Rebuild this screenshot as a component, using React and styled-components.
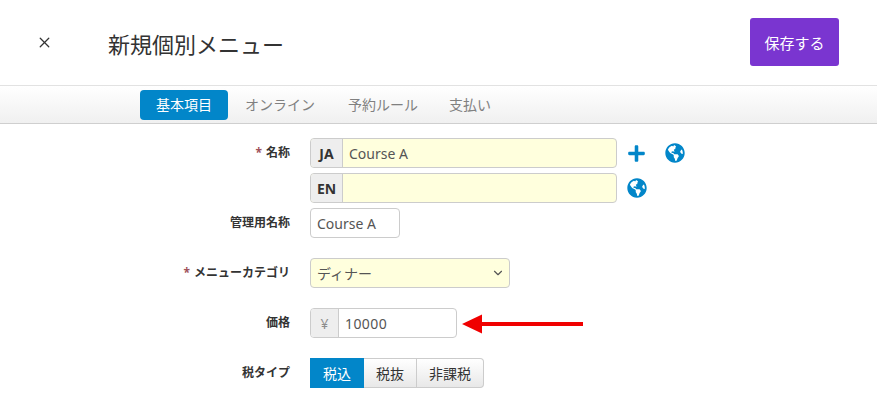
import styled, { createGlobalStyle } from 'styled-components'
import { FaPlus, FaGlobeAmericas } from 'react-icons/fa'
import { X, ChevronDown } from 'lucide-react'

const GlobalStyle = createGlobalStyle`
    html, body {
        margin: 0;
        padding: 0;
        background: #ffffff;
        font-family: 'Noto Sans', 'Noto Sans CJK JP', sans-serif;
    }
`

const Page = styled.div`
    position: relative;
    width: 877px;
    height: 400px;
    overflow: hidden;
    background: #ffffff;
`

const Header = styled.header`
    display: flex;
    align-items: center;
    height: 85px;
    padding: 0 38px 0 36px;
    box-sizing: border-box;
`

const CloseButton = styled.span`
    display: flex;
    width: 72px;
    color: #333333;
`

const Title = styled.h1`
    flex: 1;
    margin: 0;
    font-size: 22px;
    font-weight: 400;
    color: #333333;
`

const SaveButton = styled.button`
    width: 89px;
    height: 48px;
    margin-top: -1px;
    border: 0;
    border-radius: 3px;
    background: #7a35d0;
    color: #ffffff;
    font: inherit;
    font-size: 15px;
`

const TabBar = styled.nav`
    display: flex;
    align-items: center;
    gap: 0;
    height: 39px;
    padding-left: 140px;
    box-sizing: border-box;
    border-top: 1px solid #e2e2e2;
    border-bottom: 1px solid #cfcfcf;
    background: linear-gradient(#ffffff, #f0f0f0);
`

const Tab = styled.span`
    height: 30px;
    padding: 0 16px;
    margin-right: ${({ $gap }) => $gap || 0}px;
    border-radius: 4px;
    line-height: 30px;
    font-size: 14px;
    color: ${({ $active }) => ($active ? '#ffffff' : '#808080')};
    background: ${({ $active }) => ($active ? '#0286c9' : 'transparent')};
`

const Form = styled.form`
    display: flex;
    flex-direction: column;
    padding-top: 14px;
`

const Row = styled.div`
    display: grid;
    grid-template-columns: 290px 1fr;
    column-gap: 20px;
    margin-bottom: ${({ $after }) => $after}px;
`

const Label = styled.label`
    text-align: right;
    line-height: 30px;
    font-size: 12px;
    font-weight: 700;
    color: #333333;
`

const Star = styled.span`
    margin-right: 4px;
    color: #a0525a;
`

const Control = styled.div`
    display: flex;
    align-items: center;
`

const InputGroup = styled.div`
    display: flex;
    width: ${({ $width }) => $width}px;
    height: 30px;
    box-sizing: border-box;
    border: 1px solid #cccccc;
    border-radius: 4px;
    overflow: hidden;
    background: ${({ $required }) => ($required ? '#ffffdd' : '#ffffff')};
`

const Addon = styled.span`
    display: flex;
    align-items: center;
    justify-content: center;
    width: ${({ $width }) => $width}px;
    border-right: 1px solid #cccccc;
    background: #eeeeee;
    font-size: 14px;
    font-weight: ${({ $muted }) => ($muted ? 400 : 700)};
    color: ${({ $muted }) => ($muted ? '#8c8c8c' : '#333333')};
`

const Field = styled.span`
    display: flex;
    flex: 1;
    align-items: center;
    justify-content: space-between;
    padding: 0 ${({ $right }) => $right || 6}px 0 6px;
    font-size: 14px;
    letter-spacing: ${({ $spaced }) => ($spaced ? '0.4px' : '0')};
    color: #555555;
`

const IconLink = styled.span`
    display: flex;
    margin-left: ${({ $left }) => $left}px;
    color: #0286c9;
`

const Segments = styled.div`
    display: flex;
    height: 30px;
`

const Segment = styled.span`
    display: flex;
    align-items: center;
    justify-content: center;
    width: ${({ $width }) => $width}px;
    box-sizing: border-box;
    border: 1px solid ${({ $active }) => ($active ? '#0286c9' : '#cccccc')};
    border-left-width: ${({ $active }) => ($active ? 1 : 0)}px;
    border-radius: ${({ $last }) => ($last ? '0 4px 4px 0' : '0')};
    background: ${({ $active }) =>
        $active ? '#0286c9' : 'linear-gradient(#ffffff, #e8e8e8)'};
    color: ${({ $active }) => ($active ? '#ffffff' : '#333333')};
    font-size: 14px;
`

const Arrow = styled.svg`
    position: absolute;
    left: 462px;
    top: 313px;
`

function App() {
    return (
        <Page>
            <GlobalStyle />
            <Header>
                <CloseButton>
                    <X size={17} strokeWidth={1.8} />
                </CloseButton>
                <Title>新規個別メニュー</Title>
                <SaveButton type="button">保存する</SaveButton>
            </Header>
            <TabBar>
                <Tab $active $gap={1}>基本項目</Tab>
                <Tab $gap={1}>オンライン</Tab>
                <Tab $gap={-1}>予約ルール</Tab>
                <Tab>支払い</Tab>
            </TabBar>
            <Form>
                <Row $after={5}>
                    <Label><Star>*</Star>名称</Label>
                    <Control>
                        <InputGroup $width={307} $required>
                            <Addon $width={31}>JA</Addon>
                            <Field>Course A</Field>
                        </InputGroup>
                        <IconLink $left={10}><FaPlus size={19} /></IconLink>
                        <IconLink $left={19}><FaGlobeAmericas size={20} /></IconLink>
                    </Control>
                </Row>
                <Row $after={5}>
                    <span />
                    <Control>
                        <InputGroup $width={307} $required>
                            <Addon $width={31}>EN</Addon>
                            <Field />
                        </InputGroup>
                        <IconLink $left={10}><FaGlobeAmericas size={20} /></IconLink>
                    </Control>
                </Row>
                <Row $after={20}>
                    <Label>管理用名称</Label>
                    <Control>
                        <InputGroup $width={90}>
                            <Field>Course A</Field>
                        </InputGroup>
                    </Control>
                </Row>
                <Row $after={20}>
                    <Label><Star>*</Star>メニューカテゴリ</Label>
                    <Control>
                        <InputGroup $width={200} $required>
                            <Field $right={4}>
                                ディナー
                                <ChevronDown size={14} strokeWidth={2} />
                            </Field>
                        </InputGroup>
                    </Control>
                </Row>
                <Row $after={20}>
                    <Label>価格</Label>
                    <Control>
                        <InputGroup $width={147}>
                            <Addon $width={27} $muted>¥</Addon>
                            <Field $spaced>10000</Field>
                        </InputGroup>
                    </Control>
                </Row>
                <Row $after={0}>
                    <Label>税タイプ</Label>
                    <Control>
                        <Segments>
                            <Segment $active $width={54}>税込</Segment>
                            <Segment $width={53}>税抜</Segment>
                            <Segment $width={67} $last>非課税</Segment>
                        </Segments>
                    </Control>
                </Row>
            </Form>
            <Arrow width="122" height="22" viewBox="0 0 122 22">
                <path d="M0 11 L20 1.500 V9 H121 V13 H20 V20.500 Z" fill="#f00000" />
            </Arrow>
        </Page>
    )
}

export default App
